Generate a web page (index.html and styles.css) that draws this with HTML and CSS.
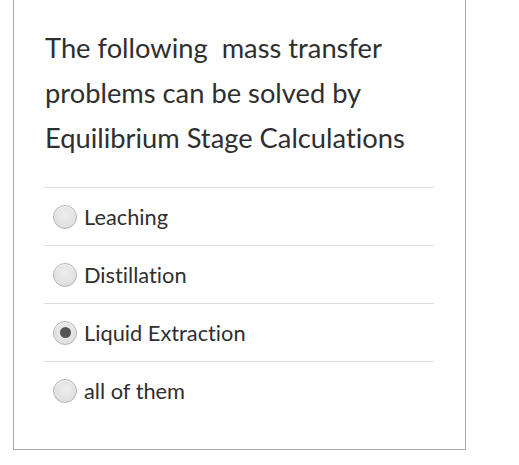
FILE: index.html
```html
<!DOCTYPE html>
<html>
<head>
<meta charset="utf-8">
<link rel="stylesheet" href="styles.css">
</head>
<body>
<div class="card">
  <div class="question">The following&nbsp; mass transfer problems can be solved by Equilibrium Stage Calculations</div>
  <ul class="options">
    <li class="option"><span class="radio"></span><span class="label">Leaching</span></li>
    <li class="option"><span class="radio"></span><span class="label">Distillation</span></li>
    <li class="option"><span class="radio checked"></span><span class="label">Liquid Extraction</span></li>
    <li class="option"><span class="radio"></span><span class="label">all of them</span></li>
  </ul>
</div>
</body>
</html>
```
FILE: styles.css
```css
html, body {
  margin: 0;
  padding: 0;
  background: #ffffff;
}
body {
  font-family: Lato, "Open Sans", sans-serif;
  color: #2f2f2f;
  font-variant-ligatures: none;
}
.card {
  margin-left: 13px;
  width: 453px;
  height: 450px;
  box-sizing: border-box;
  border: 1.5px solid #a9a9a9;
  border-top: none;
  padding: 25px 31px 0 30px;
}
.question {
  font-size: 27.3px;
  line-height: 45px;
  width: 385px;
  padding-left: 1px;
}
.options {
  list-style: none;
  margin: 27px 0 0 0;
  padding: 0;
}
.option {
  display: flex;
  align-items: center;
  gap: 7px;
  height: 57px;
  border-top: 1.5px solid #dcdcdc;
  padding-left: 9px;
  font-size: 21.8px;
}
.radio {
  width: 22px;
  height: 22px;
  border-radius: 50%;
  border: 1px solid #b5b5b5;
  background: radial-gradient(circle at 50% 40%, #ededed 0%, #dadada 100%);
  box-shadow: inset 0 1px 1px rgba(255,255,255,0.8);
  position: relative;
  flex: none;
}
.radio.checked::after {
  content: "";
  position: absolute;
  left: 5.5px;
  top: 5.5px;
  width: 11px;
  height: 11px;
  border-radius: 50%;
  background: #555555;
}
.label {
  color: #2f2f2f;
}
```
